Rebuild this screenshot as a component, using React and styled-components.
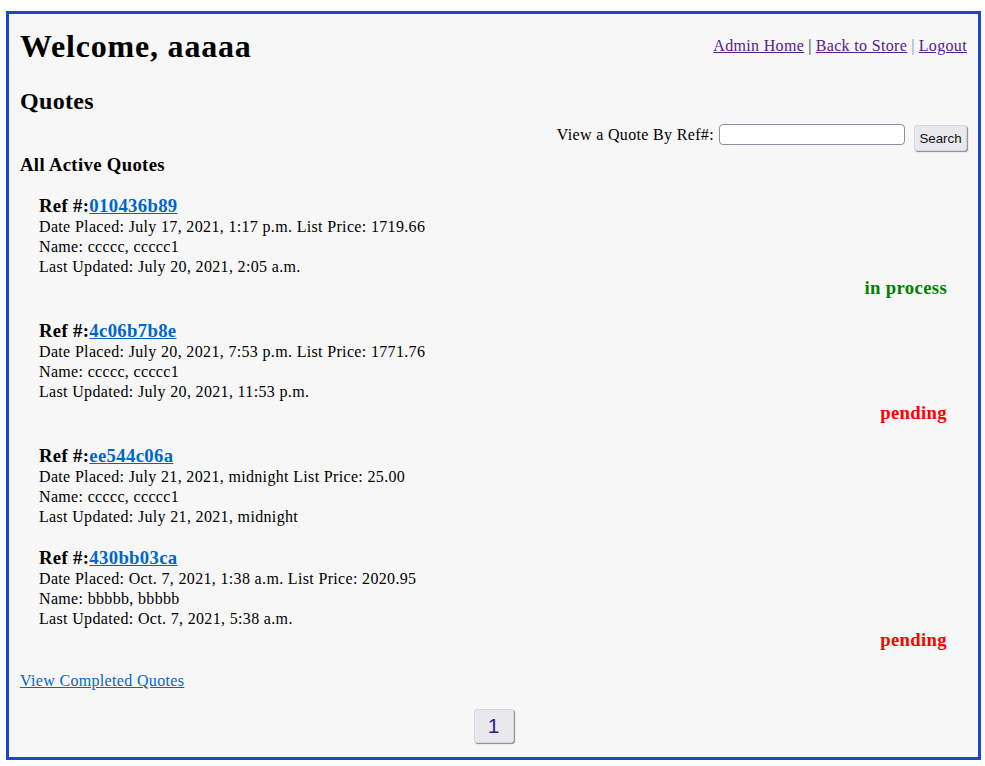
import React from "react";
import styled, { createGlobalStyle } from "styled-components";

const GlobalStyle = createGlobalStyle`
  html, body {
    margin: 0;
    padding: 0;
    background: #ffffff;
  }
  body {
    font-family: "Liberation Serif", "Times New Roman", serif;
    font-size: 16px;
    letter-spacing: 0.021em;
    color: #000;
  }
`;

const Page = styled.div`
  box-sizing: border-box;
  width: 975px;
  margin: 11px 0 0 6px;
  border: 3px solid #1a47d2;
  background: #f7f7f7;
  padding: 14px 11px 14px 11px;
`;

const Header = styled.div`
  display: flex;
  justify-content: space-between;
  align-items: flex-start;
`;

const Title = styled.h1`
  margin: 0;
  font-size: 32px;
  line-height: 36px;
  font-weight: bold;
  letter-spacing: 0.025em;
`;

const Nav = styled.div`
  padding-top: 8px;
  line-height: 20px;
  font-size: 16px;
`;

const NavLink = styled.a`
  color: #551a8b;
  text-decoration: underline;
`;

const Sep = styled.span`
  color: ${(p) => p.$color || "#333"};
  margin: 0 4px;
`;

const SubTitle = styled.h2`
  margin: 23px 0 0 0;
  font-size: 24px;
  line-height: 28px;
`;

const SearchRow = styled.form`
  display: flex;
  justify-content: flex-end;
  align-items: flex-start;
  margin-top: 9px;
  height: 27px;
`;

const SearchLabel = styled.label`
  line-height: 21px;
  margin-right: 5px;
`;

const SearchInput = styled.input`
  box-sizing: border-box;
  width: 186px;
  height: 21px;
  border: 1px solid #8f8f9d;
  border-radius: 4px;
  background: #fff;
  padding: 1px 4px;
`;

const Button = styled.button`
  box-sizing: border-box;
  font-family: "Liberation Sans", Arial, sans-serif;
  letter-spacing: 0;
  background: #e9e9ed;
  border: 1px solid #d6d6dc;
  border-radius: 3px;
  box-shadow: 1px 1px 1px #8a8a8a;
  color: #111;
  cursor: pointer;
`;

const SearchButton = styled(Button)`
  margin: 1px 0 0 9px;
  height: 26px;
  width: 53px;
  font-size: 13.33px;
  padding: 0;
`;

const SectionTitle = styled.h3`
  margin: 3px 0 0 0;
  font-size: 18.72px;
  line-height: 22px;
`;

const QuoteList = styled.div`
  margin-top: 19px;
  padding: 0 20px 0 19px;
`;

const Quote = styled.div`
  margin-bottom: 20px;
`;

const RefLine = styled.div`
  font-size: 18.72px;
  line-height: 22px;
  font-weight: bold;
`;

const RefLink = styled.a`
  color: #0066cc;
  text-decoration: underline;
`;

const Line = styled.div`
  line-height: 20px;
`;

const Status = styled.div`
  text-align: right;
  font-size: 18.72px;
  line-height: 22px;
  padding-bottom: 1px;
  font-weight: bold;
  color: ${(p) => (p.$state === "in process" ? "#008000" : "#ff0000")};
`;

const CompletedLink = styled.a`
  display: block;
  margin-top: -1px;
  line-height: 20px;
  color: #0066cc;
  text-decoration: underline;
`;

const Pager = styled.div`
  display: flex;
  justify-content: center;
  margin-top: 18px;
`;

const PageButton = styled(Button)`
  width: 40px;
  height: 34px;
  font-size: 21px;
  color: #2e1f8f;
  padding: 0;
`;

const quotes = [
  {
    ref: "010436b89",
    placed: "July 17, 2021, 1:17 p.m.",
    price: "1719.66",
    name: "ccccc, ccccc1",
    updated: "July 20, 2021, 2:05 a.m.",
    status: "in process",
  },
  {
    ref: "4c06b7b8e",
    placed: "July 20, 2021, 7:53 p.m.",
    price: "1771.76",
    name: "ccccc, ccccc1",
    updated: "July 20, 2021, 11:53 p.m.",
    status: "pending",
  },
  {
    ref: "ee544c06a",
    placed: "July 21, 2021, midnight",
    price: "25.00",
    name: "ccccc, ccccc1",
    updated: "July 21, 2021, midnight",
    status: null,
  },
  {
    ref: "430bb03ca",
    placed: "Oct. 7, 2021, 1:38 a.m.",
    price: "2020.95",
    name: "bbbbb, bbbbb",
    updated: "Oct. 7, 2021, 5:38 a.m.",
    status: "pending",
  },
];

export default function App() {
  return (
    <>
      <GlobalStyle />
      <Page>
        <Header>
          <Title>Welcome, aaaaa</Title>
          <Nav>
            <NavLink href="#">Admin Home</NavLink>
            <Sep>|</Sep>
            <NavLink href="#">Back to Store</NavLink>
            <Sep $color="#6b8fd6">|</Sep>
            <NavLink href="#">Logout</NavLink>
          </Nav>
        </Header>
        <SubTitle>Quotes</SubTitle>
        <SearchRow onSubmit={(e) => e.preventDefault()}>
          <SearchLabel>View a Quote By Ref#:</SearchLabel>
          <SearchInput type="text" />
          <SearchButton type="submit">Search</SearchButton>
        </SearchRow>
        <SectionTitle>All Active Quotes</SectionTitle>
        <QuoteList>
          {quotes.map((q) => (
            <Quote key={q.ref}>
              <RefLine>
                Ref #:<RefLink href="#">{q.ref}</RefLink>
              </RefLine>
              <Line>
                Date Placed: {q.placed} List Price: {q.price}
              </Line>
              <Line>Name: {q.name}</Line>
              <Line>Last Updated: {q.updated}</Line>
              {q.status && <Status $state={q.status}>{q.status}</Status>}
            </Quote>
          ))}
        </QuoteList>
        <CompletedLink href="#">View Completed Quotes</CompletedLink>
        <Pager>
          <PageButton type="button">1</PageButton>
        </Pager>
      </Page>
    </>
  );
}
